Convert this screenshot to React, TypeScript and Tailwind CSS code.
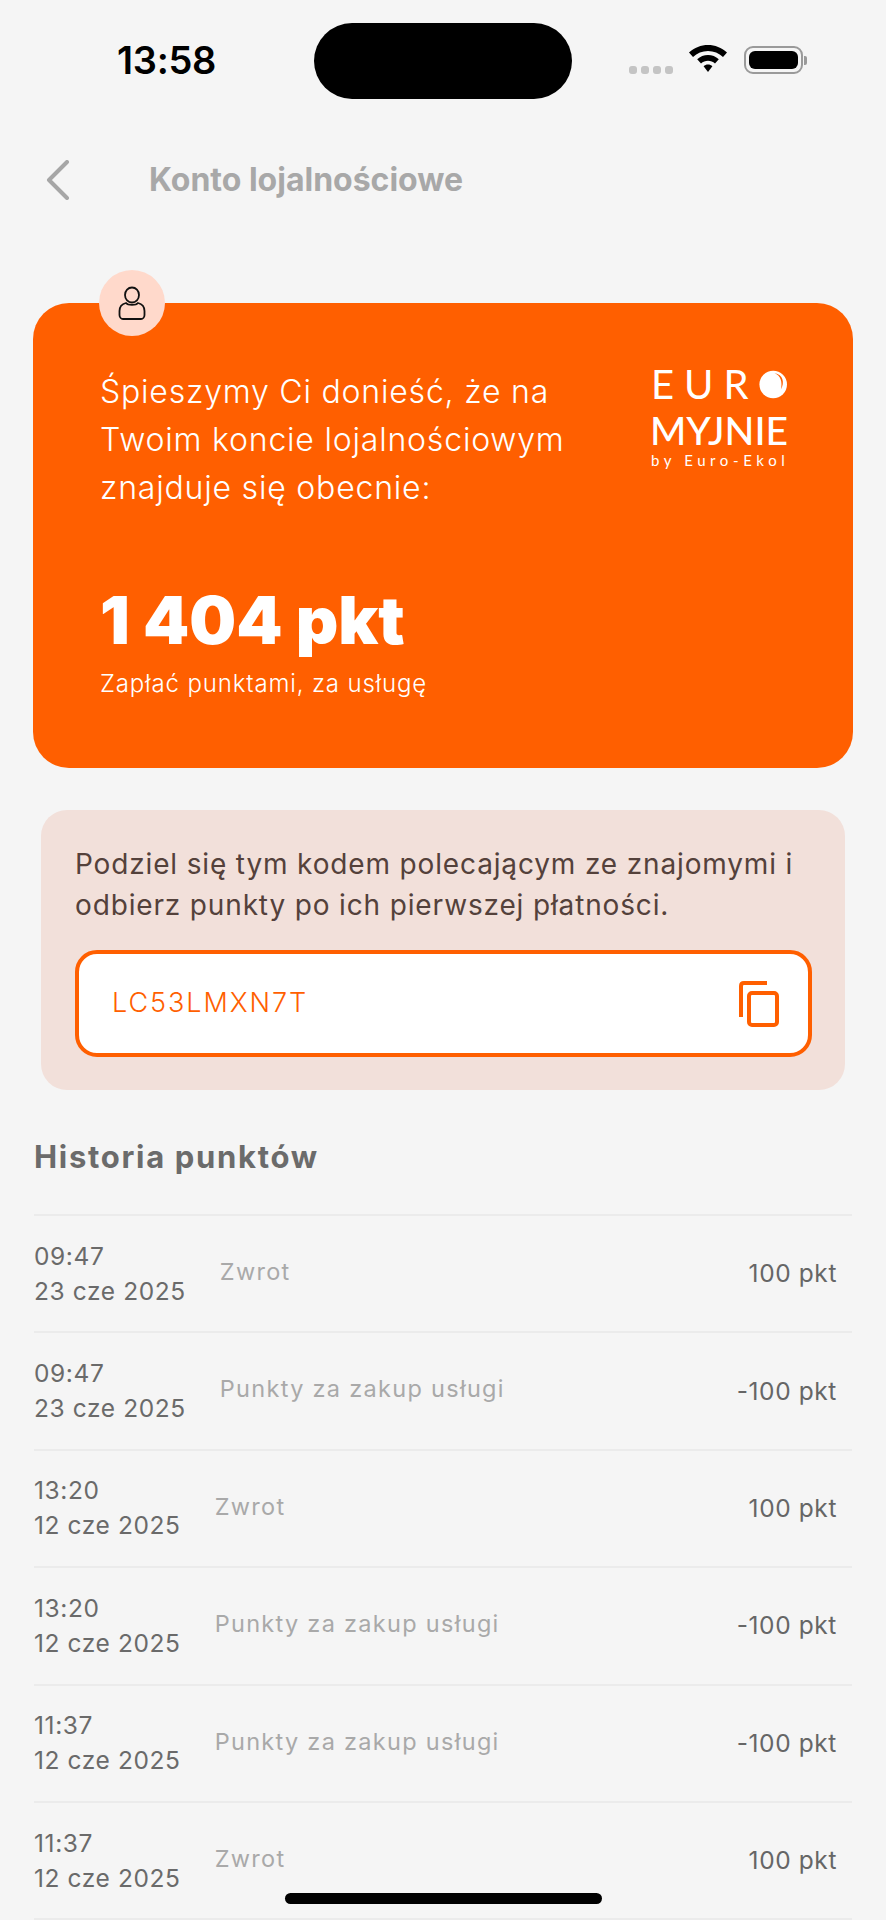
const HISTORY = [
  { time: "09:47", date: "23 cze 2025", label: "Zwrot", points: "100 pkt" },
  { time: "09:47", date: "23 cze 2025", label: "Punkty za zakup usługi", points: "-100 pkt" },
  { time: "13:20", date: "12 cze 2025", label: "Zwrot", points: "100 pkt" },
  { time: "13:20", date: "12 cze 2025", label: "Punkty za zakup usługi", points: "-100 pkt" },
  { time: "11:37", date: "12 cze 2025", label: "Punkty za zakup usługi", points: "-100 pkt" },
  { time: "11:37", date: "12 cze 2025", label: "Zwrot", points: "100 pkt" },
];

function StatusBar() {
  return (
    <div className="h-[123px] pt-[23px] flex items-start relative">
      <div className="w-[314px] pl-[117px] pt-[16px] text-[38px] leading-[43px] font-semibold text-black font-['Inter',sans-serif] tracking-[-0.3px]">
        13:58
      </div>
      <div className="w-[258px] h-[76px] rounded-[38px] bg-black" />
      <div className="flex items-start pl-[57px]">
        <div className="flex gap-[4px] pt-[43px]">
          {[0, 1, 2, 3].map((i) => (
            <span key={i} className="w-[8px] h-[8px] rounded-[3px] bg-[#c4c4c4]" />
          ))}
        </div>
        <svg width="40" height="30" viewBox="0 0 40 30" className="ml-[15px] mt-[21px]">
          <path d="M20 1C13 1 6.500 3.500 1 8.500L5 13C9 9.300 14.300 7 20 7C25.700 7 31 9.300 35 13L39 8.500C33.500 3.500 27 1 20 1Z" fill="#000" />
          <path d="M20 11C16 11 12.200 12.500 9.200 15.200L13 19.500C15 17.800 17.400 16.800 20 16.800C22.600 16.800 25 17.800 27 19.500L30.800 15.200C27.800 12.500 24 11 20 11Z" fill="#000" />
          <path d="M20 20.500C18.300 20.500 16.800 21.100 15.600 22.200L20 28L24.400 22.200C23.200 21.100 21.700 20.500 20 20.500Z" fill="#000" />
        </svg>
        <div className="ml-[16px] mt-[23px] flex items-center">
          <div className="w-[59px] h-[28px] rounded-[9px] border-2 border-[#9a9a9a] p-[3px] flex">
            <div className="flex-1 rounded-[6px] bg-black" />
          </div>
          <div className="w-[3px] h-[9px] rounded-r-[2px] bg-[#9a9a9a] ml-[1px]" />
        </div>
      </div>
    </div>
  );
}

function Logo() {
  return (
    <div className="w-[136px] shrink-0 text-white font-['Lato',sans-serif] mt-[65px] mr-[66px]">
      <div className="flex items-center justify-between h-[33px]">
        <span className="text-[40px] leading-[33px] tracking-[10px] font-normal">EUR</span>
        <svg width="33" height="33" viewBox="0 0 33 33">
          <circle cx="16.500" cy="16.500" r="16" fill="#fff" />
          <path d="M18 3C25 6 27.500 13 25.500 22C30 14 28 5 18 3Z" fill="#ff5f00" />
        </svg>
      </div>
      <div className="text-[39px] leading-[35px] font-medium mt-[12px] -ml-[1px] whitespace-nowrap">MYJNIE</div>
      <div className="text-[15px] leading-[16px] mt-[4px] tracking-[4.600px] whitespace-nowrap">by Euro-Ekol</div>
    </div>
  );
}

function CopyIcon() {
  return (
    <svg width="40" height="46" viewBox="0 0 40 46" fill="none" stroke="#ff5f00" strokeWidth="4">
      <path d="M28 2H5C3 2 2 3 2 5V36" />
      <rect x="10" y="12" width="28" height="32" rx="3" />
    </svg>
  );
}

function PersonIcon() {
  return (
    <svg width="28" height="34" viewBox="0 0 28 34" fill="none" stroke="#111" strokeWidth="1.800">
      <ellipse cx="14" cy="9" rx="7" ry="7.500" />
      <path d="M8 17C4 18 1.500 21 1.500 25V29C1.500 31 3 33 5 33H23C25 33 26.500 31 26.500 29V25C26.500 21 24 18 20 17C18 19.500 10 19.500 8 17Z" />
    </svg>
  );
}

function HistoryRow({ item }: { item: (typeof HISTORY)[number] }) {
  return (
    <div className="h-[117.400px] border-t-2 border-[#ebebeb] flex items-center pr-[15px]">
      <div className="text-[24.500px] leading-[35px] text-[#6a6a6a] tracking-[0.6px] whitespace-nowrap">
        <div>{item.time}</div>
        <div>{item.date}</div>
      </div>
      <div className="ml-[34px] flex-1 -mt-[4px] text-[23.500px] text-[#a9a9a9] tracking-[1.300px] whitespace-nowrap">
        {item.label}
      </div>
      <div className="text-[24.500px] text-[#666] tracking-[0.6px] whitespace-nowrap">{item.points}</div>
    </div>
  );
}

export default function App() {
  return (
    <div className="relative w-[886px] h-[1920px] overflow-hidden bg-[#f5f5f5] font-['Inter',sans-serif]">
      <StatusBar />

      {/* Header */}
      <div className="h-[72px] mt-[21px] flex items-center pl-[46px]">
        <svg width="24" height="40" viewBox="0 0 24 40" fill="none" stroke="#a6a6a6" strokeWidth="4" strokeLinecap="round" strokeLinejoin="round">
          <path d="M21 2L3 20L21 38" />
        </svg>
        <h1 className="ml-[79px] text-[32px] leading-none font-bold text-[#a8a8a8]">Konto lojalnościowe</h1>
      </div>

      {/* Points card */}
      <div className="relative mx-[33px] mt-[87px] h-[465px] rounded-[36px] bg-[#ff5f00] flex justify-between text-white">
        <div className="absolute left-[66px] -top-[33px] w-[66px] h-[66px] rounded-full bg-[#ffd9cb] flex items-center justify-center">
          <PersonIcon />
        </div>
        <div className="pl-[67px] pt-[65px]">
          <p className="text-[32px] leading-[48px] font-light tracking-[0.8px] whitespace-pre-line">
            {"Śpieszymy Ci donieść, że na\nTwoim koncie lojalnościowym\nznajduje się obecnie:"}
          </p>
          <div className="mt-[69px] text-[66px] leading-[78px] font-black">1 404 pkt</div>
          <div className="mt-[10px] text-[24px] leading-[30px] font-light tracking-[0.85px]">Zapłać punktami, za usługę</div>
        </div>
        <Logo />
      </div>

      {/* Referral code */}
      <div className="ml-[41px] mr-[41px] mt-[42px] h-[280px] rounded-[26px] bg-[#f2e0da] pl-[34px] pr-[33px] pt-[34px]">
        <p className="text-[28px] leading-[41px] text-[#54413b] tracking-[0.85px] whitespace-nowrap">
          Podziel się tym kodem polecającym ze znajomymi i
          <br />
          odbierz punkty po ich pierwszej płatności.
        </p>
        <div className="mt-[24px] h-[107px] rounded-[22px] border-4 border-[#ff5f00] bg-white flex items-center justify-between pl-[33px] pr-[29px]">
          <span className="text-[27px] font-light text-[#ff5f00] tracking-[1.950px]">LC53LMXN7T</span>
          <CopyIcon />
        </div>
      </div>

      {/* History */}
      <div className="mx-[34px] mt-[48px]">
        <h2 className="text-[31px] leading-[38px] font-bold text-[#6b6b6b] tracking-[1.700px]">Historia punktów</h2>
        <div className="mt-[38px]">
          {HISTORY.map((item, i) => (
            <HistoryRow key={i} item={item} />
          ))}
        </div>
        <div className="border-t-2 border-[#ebebeb]" />
      </div>

      {/* Home indicator */}
      <div className="absolute left-[285px] bottom-[16px] w-[317px] h-[11px] rounded-full bg-black" />
    </div>
  );
}
